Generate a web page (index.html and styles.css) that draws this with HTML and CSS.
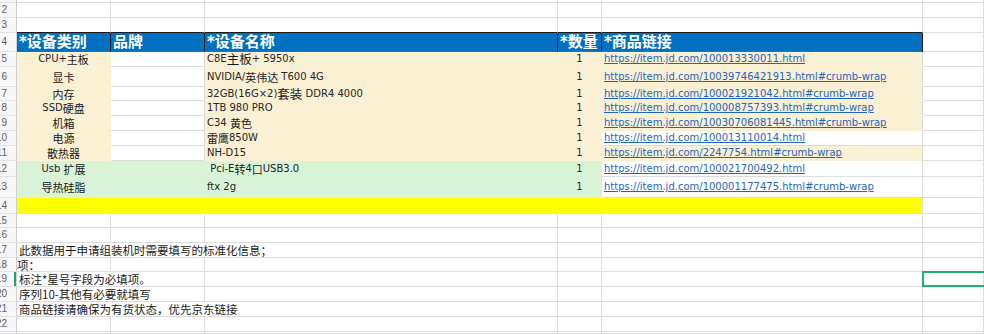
FILE: index.html
```html
<!DOCTYPE html>
<html lang="zh-CN">
<head>
<meta charset="utf-8">
<title>设备清单</title>
<link rel="stylesheet" href="styles.css">
</head>
<body>
<div class="sheet">
  <!-- row 1 (cropped) -->
  <div class="c rh"></div><div class="c"></div><div class="c"></div><div class="c"></div><div class="c"></div><div class="c"></div><div class="c"></div>
  <!-- row 2 -->
  <div class="c rh">2</div><div class="c"></div><div class="c"></div><div class="c"></div><div class="c"></div><div class="c"></div><div class="c"></div>
  <!-- row 3 -->
  <div class="c rh">3</div><div class="c top"></div><div class="c top"></div><div class="c top"></div><div class="c top"></div><div class="c top"></div><div class="c"></div>
  <!-- row 4 header -->
  <div class="c rh">4</div>
  <div class="c h">*设备类别</div>
  <div class="c h">品牌</div>
  <div class="c h">*设备名称</div>
  <div class="c h">*数量</div>
  <div class="c h">*商品链接</div>
  <div class="c"></div>
  <!-- row 5 -->
  <div class="c rh">5</div>
  <div class="c be ctr">CPU+<span class="k">主板</span></div>
  <div class="c"></div>
  <div class="c be">C8E<span class="k big">主板</span>+ 5950x</div>
  <div class="c be ctr">1</div>
  <div class="c be re"><a class="lk" href="#">https://item.jd.com/100013330011.html</a></div>
  <div class="c"></div>
  <!-- row 6 -->
  <div class="c rh">6</div>
  <div class="c be ctr"><span class="k">显卡</span></div>
  <div class="c"></div>
  <div class="c be">NVIDIA/<span class="k">英伟达</span> T600 4G</div>
  <div class="c be ctr">1</div>
  <div class="c be re"><a class="lk" href="#">https://item.jd.com/10039746421913.html#crumb-wrap</a></div>
  <div class="c"></div>
  <!-- row 7 -->
  <div class="c rh">7</div>
  <div class="c be ctr"><span class="k">内存</span></div>
  <div class="c"></div>
  <div class="c be">32GB(16G×2)<span class="k big">套装</span> DDR4 4000</div>
  <div class="c be ctr">1</div>
  <div class="c be re"> <a class="lk" href="#">https://item.jd.com/100021921042.html#crumb-wrap</a></div>
  <div class="c"></div>
  <!-- row 8 -->
  <div class="c rh">8</div>
  <div class="c be ctr">SSD<span class="k">硬盘</span></div>
  <div class="c"></div>
  <div class="c be">1TB 980 PRO</div>
  <div class="c be ctr">1</div>
  <div class="c be re"> <a class="lk" href="#">https://item.jd.com/100008757393.html#crumb-wrap</a></div>
  <div class="c"></div>
  <!-- row 9 -->
  <div class="c rh">9</div>
  <div class="c be ctr"><span class="k">机箱</span></div>
  <div class="c"></div>
  <div class="c be">C34 <span class="k">黄色</span></div>
  <div class="c be ctr">1</div>
  <div class="c be re"><a class="lk" href="#">https://item.jd.com/10030706081445.html#crumb-wrap</a></div>
  <div class="c"></div>
  <!-- row 10 -->
  <div class="c rh">10</div>
  <div class="c be ctr"><span class="k">电源</span></div>
  <div class="c"></div>
  <div class="c be"> <span class="k">雷鹰</span>850W</div>
  <div class="c be ctr">1</div>
  <div class="c"><a class="lk" href="#">https://item.jd.com/100013110014.html</a></div>
  <div class="c"></div>
  <!-- row 11 -->
  <div class="c rh">11</div>
  <div class="c be ctr"><span class="k">散热器</span></div>
  <div class="c"></div>
  <div class="c be">NH-D15</div>
  <div class="c be ctr">1</div>
  <div class="c be re"> <a class="lk" href="#">https://item.jd.com/2247754.html#crumb-wrap</a></div>
  <div class="c"></div>
  <!-- row 12 -->
  <div class="c rh">12</div>
  <div class="c gr ctr">Usb <span class="k">扩展</span></div>
  <div class="c gr"></div>
  <div class="c gr"> Pci-E<span class="k">转</span>4<span class="k">口</span>USB3.0</div>
  <div class="c gr ctr">1</div>
  <div class="c"><a class="lk" href="#">https://item.jd.com/100021700492.html</a></div>
  <div class="c"></div>
  <!-- row 13 -->
  <div class="c rh">13</div>
  <div class="c gr ctr"><span class="k">导热硅脂</span></div>
  <div class="c gr"></div>
  <div class="c gr">ftx 2g</div>
  <div class="c gr ctr">1</div>
  <div class="c"><a class="lk" href="#">https://item.jd.com/100001177475.html#crumb-wrap</a></div>
  <div class="c"></div>
  <!-- row 14 -->
  <div class="c rh">14</div><div class="c ye"></div><div class="c ye"></div><div class="c ye"></div><div class="c ye"></div><div class="c ye re"></div><div class="c"></div>
  <!-- row 15 -->
  <div class="c rh">15</div><div class="c"></div><div class="c"></div><div class="c"></div><div class="c"></div><div class="c"></div><div class="c"></div>
  <!-- row 16 -->
  <div class="c rh">16</div><div class="c"></div><div class="c"></div><div class="c"></div><div class="c"></div><div class="c"></div><div class="c"></div>
  <!-- row 17 -->
  <div class="c rh">17</div>
  <div class="c note span3">此数据用于申请组装机时需要填写的标准化信息；</div>
  <div class="c"></div><div class="c"></div><div class="c"></div>
  <!-- row 18 -->
  <div class="c rh">18</div>
  <div class="c note flush">项：</div>
  <div class="c"></div><div class="c"></div><div class="c"></div><div class="c"></div><div class="c"></div>
  <!-- row 19 -->
  <div class="c rh act">19</div>
  <div class="c note span2">标注*星号字段为必填项。</div>
  <div class="c"></div><div class="c"></div><div class="c"></div><div class="c sel"></div>
  <!-- row 20 -->
  <div class="c rh">20</div>
  <div class="c note span2">序列10-其他有必要就填写</div>
  <div class="c"></div><div class="c"></div><div class="c"></div><div class="c"></div>
  <!-- row 21 -->
  <div class="c rh">21</div>
  <div class="c note span3">商品链接请确保为有货状态，优先京东链接</div>
  <div class="c"></div><div class="c"></div><div class="c"></div>
  <!-- row 22 -->
  <div class="c rh">22</div><div class="c"></div><div class="c"></div><div class="c"></div><div class="c"></div><div class="c"></div><div class="c"></div>
  <!-- row 23 (cropped) -->
  <div class="c rh"></div><div class="c"></div><div class="c"></div><div class="c"></div><div class="c"></div><div class="c"></div><div class="c"></div>
</div>
</body>
</html>
```

FILE: styles.css
```css
html, body {
  margin: 0;
  padding: 0;
  background: #ffffff;
}

body {
  width: 984px;
  height: 334px;
  overflow: hidden;
  font-family: "DejaVu Sans", "Noto Sans CJK SC", sans-serif;
  font-size: 10px;
  color: #262626;
}

.sheet {
  display: grid;
  grid-template-columns: 17px 94px 94px 353px 44px 321px 61px;
  grid-template-rows: 3px 15px 15px 19px 15px 20px 14px 15px 15px 15px 15px 16px 21px 16px 14px 15px 15px 14px 15px 15px 15px 15px 2px;
}

.c {
  box-sizing: border-box;
  min-width: 0;
  display: flex;
  align-items: center;
  padding: 0 2px;
  border-right: 1px solid #dcdcdf;
  border-bottom: 1px solid #dcdcdf;
  white-space: pre;
  line-height: 12px;
}

.rh {
  background: #f7f7f7;
  color: #5f5f5f;
  font-family: "Liberation Sans", sans-serif;
  font-size: 10px;
  justify-content: flex-end;
  padding: 0 9px 0 0;
  border-right-color: #cfcfd3;
  border-bottom-color: #e2e2e5;
  overflow: hidden;
}

.act {
  box-shadow: inset -2px 0 0 #21a366;
}

.top {
  border-bottom-color: #1c1c1c;
}

.h {
  background: #0070c0;
  color: #ffffff;
  font-family: "DejaVu Sans", "Noto Sans CJK SC", sans-serif;
  font-weight: bold;
  font-size: 15px;
  line-height: 16px;
  border-right-color: #1c1c1c;
  border-bottom-color: #2b6fa8;
  padding-left: 2px;
}

.be {
  background: #faf0d3;
  border-right-color: #faf0d3;
  border-bottom-color: #faf0d3;
}

.gr {
  background: #d9f3d6;
  border-right-color: #d9f3d6;
  border-bottom-color: #d9f3d6;
}

.ye {
  background: #ffff00;
  border-right-color: #ffff00;
  border-bottom-color: #ffff00;
}

.re {
  border-right-color: #dcdcdf;
}

.ctr {
  justify-content: center;
}

.k {
  font-family: "Noto Sans CJK SC", sans-serif;
  font-size: 11px;
  line-height: 12px;
  color: #1a1a1a;
}

.k.big {
  font-size: 12.5px;
}

.lk {
  color: #1f66c2;
  text-decoration: underline;
}

.note {
  font-family: "Noto Sans CJK SC", sans-serif;
  font-size: 11.5px;
  color: #1a1a1a;
  padding-left: 2px;
}

.flush {
  padding-left: 0;
}

.span2 {
  grid-column: span 2;
}

.span3 {
  grid-column: span 3;
}

.sel {
  position: relative;
}

.sel::after {
  content: "";
  position: absolute;
  left: -1px;
  top: -1px;
  right: -10px;
  bottom: -1px;
  border: 2px solid #21b06f;
}
```
